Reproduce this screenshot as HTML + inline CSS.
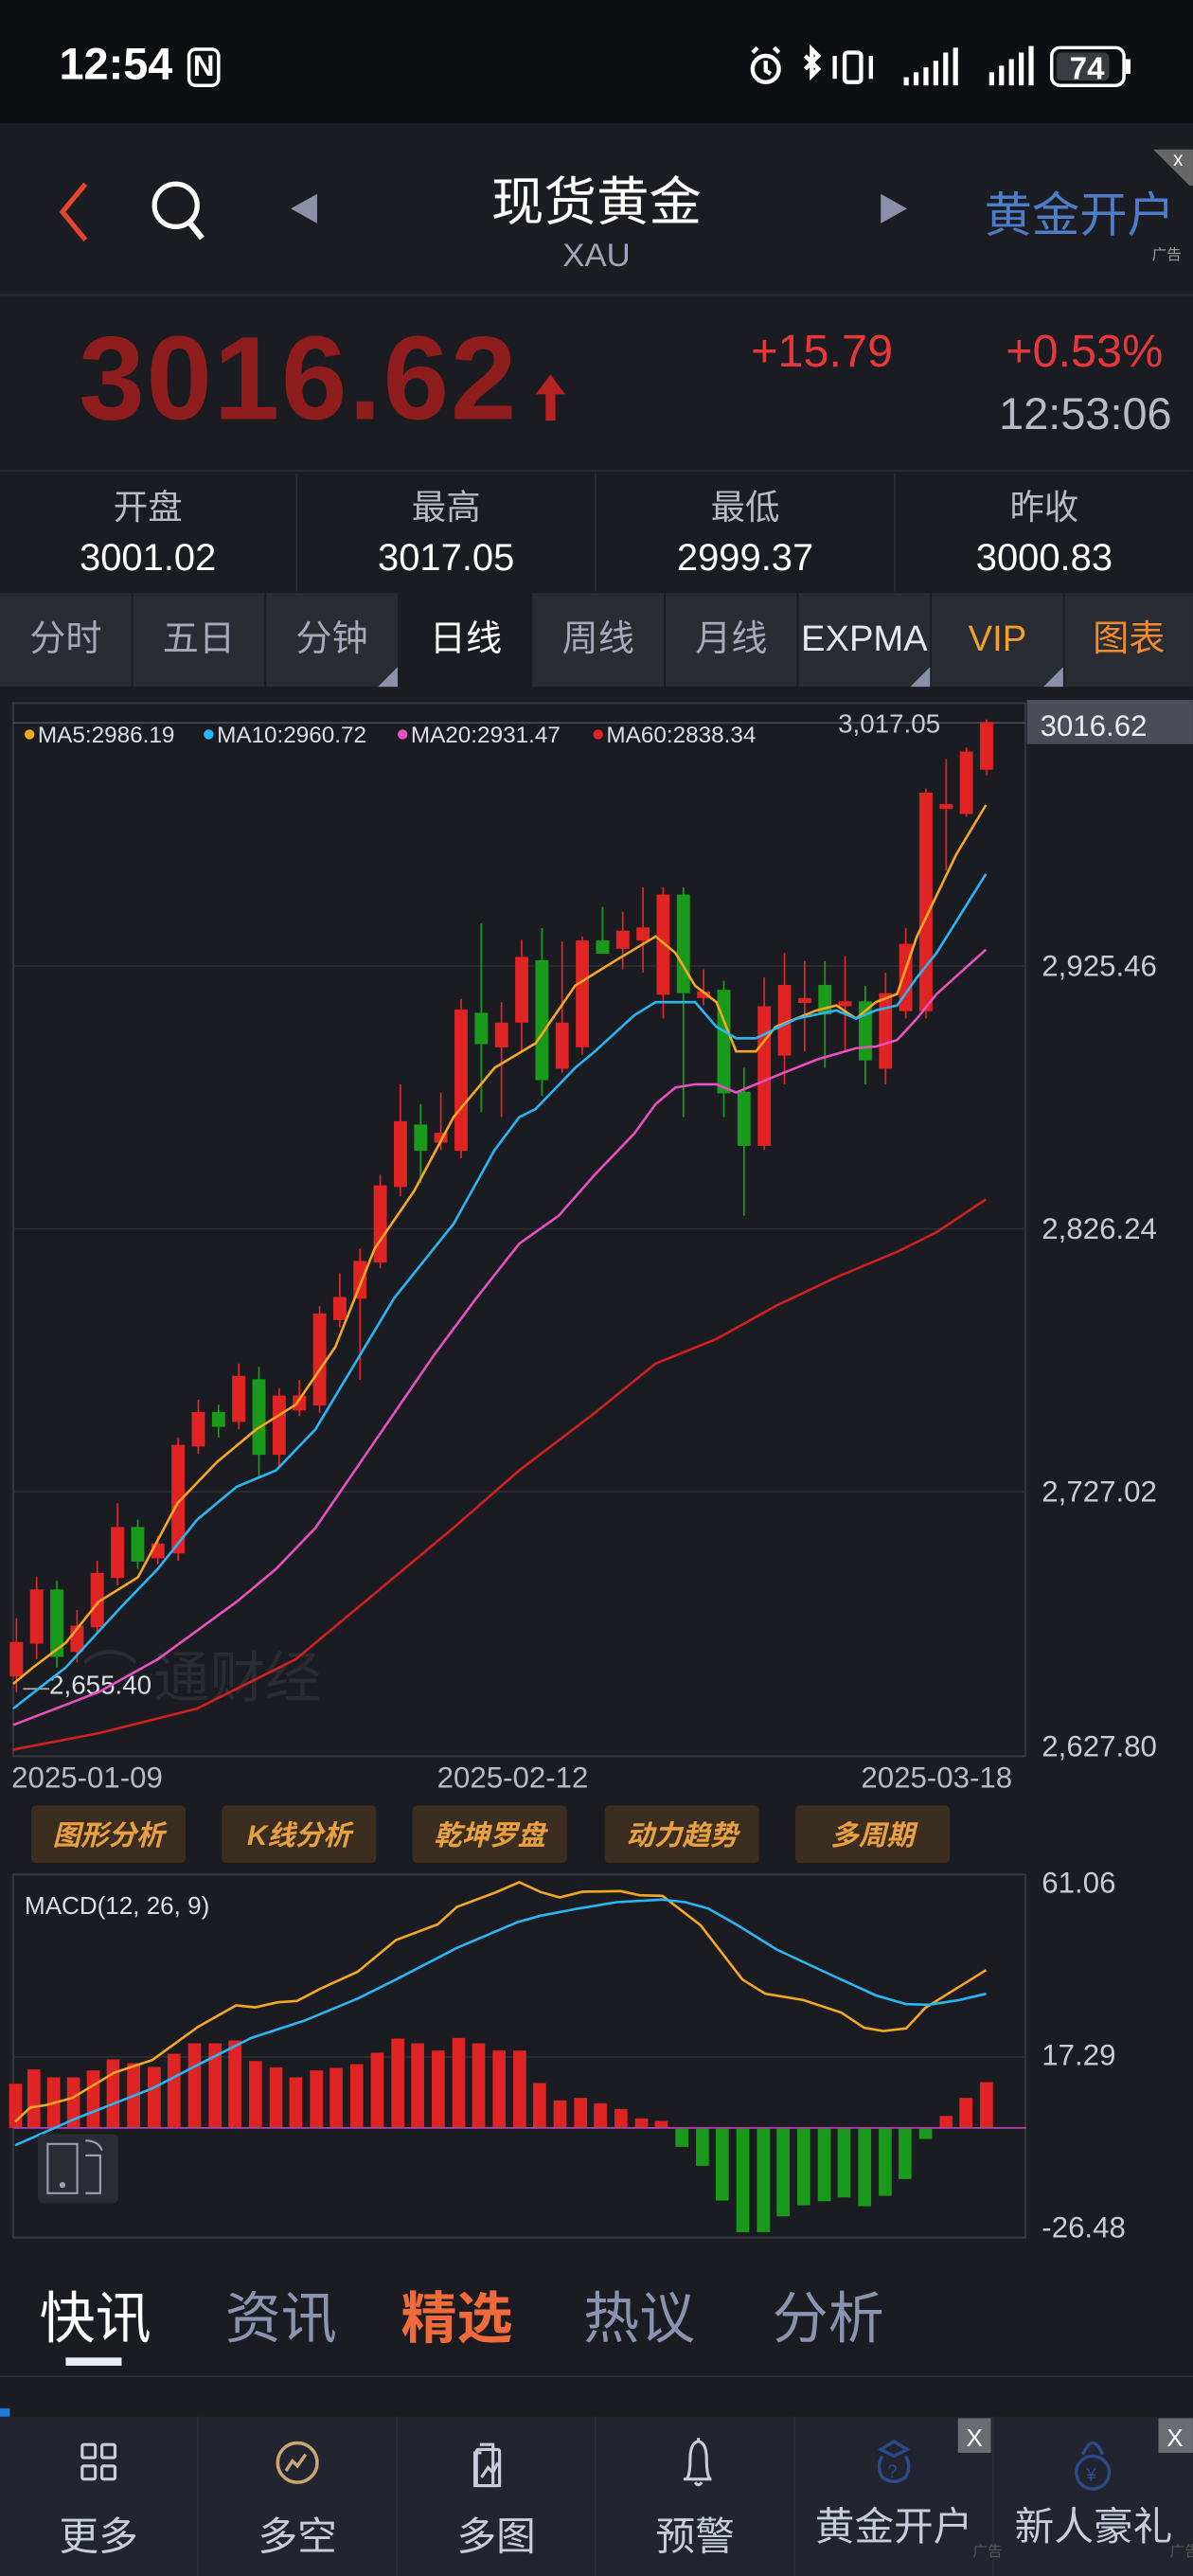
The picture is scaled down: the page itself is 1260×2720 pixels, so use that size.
<!DOCTYPE html>
<html><head><meta charset="utf-8">
<style>
*{margin:0;padding:0;box-sizing:border-box}
html,body{width:1260px;height:2720px;background:#1b1c21;overflow:hidden}
#w{width:726px;height:1568px;transform:scale(1.7355,1.7347);transform-origin:0 0;position:relative;font-family:"Liberation Sans","Noto Sans CJK SC",sans-serif;color:#fff;background:#1b1c21}
.a{position:absolute;white-space:nowrap}
</style></head><body><div id="w">
<!-- status -->
<div class="a" style="left:0;top:0;width:726px;height:75px;background:#0e0f12"></div>
<div class="a" style="left:36px;top:24px;font-size:27px;font-weight:bold">12:54</div>
<div class="a" style="left:114px;top:29px;width:20px;height:24px;border:2.5px solid #fff;border-radius:5px;font-size:18px;font-weight:bold;line-height:19px;text-align:center">N</div>
<svg class="a" style="left:450px;top:26px" width="240" height="30" viewBox="0 0 240 30">
<g fill="none" stroke="#fff" stroke-width="2.5"><circle cx="16" cy="16" r="8"/><path d="M16 11v6l3 2M8 6l3-3M24 6l-3-3"/>
<path d="M40 8l8 8-4 4V4l4 4-8 8"/><rect x="64" y="6" width="10" height="18" rx="2"/><path d="M58 8v14M80 8v14"/></g>
<g fill="#fff"><rect x="100" y="21" width="3" height="5"/><rect x="106" y="18" width="3" height="8"/><rect x="112" y="15" width="3" height="11"/><rect x="118" y="11" width="3" height="15"/><rect x="124" y="6" width="3" height="20"/><rect x="130" y="3" width="3" height="23"/>
<rect x="152" y="18" width="3" height="8"/><rect x="158" y="14" width="3" height="12"/><rect x="164" y="10" width="3" height="16"/><rect x="170" y="6" width="3" height="20"/><rect x="176" y="2" width="3" height="24"/></g>
<rect x="190" y="3" width="44" height="23" rx="5" fill="none" stroke="#fff" stroke-width="2"/><rect x="193" y="6" width="32" height="17" rx="3" fill="#3a3b40"/><rect x="235" y="10" width="3" height="9" fill="#fff"/>
<text x="201" y="22" font-size="19" font-weight="bold" fill="#fff" font-family="Liberation Sans">74</text></svg>
<!-- header -->
<div class="a" style="left:0;top:75px;width:726px;height:105px;background:#1c1d22;border-bottom:1px solid #2c2d33"></div>
<svg class="a" style="left:30px;top:108px" width="100" height="40"><path d="M22 4L8 21l14 17" fill="none" stroke="#e8452e" stroke-width="3"/><circle cx="77" cy="17" r="13" fill="none" stroke="#fff" stroke-width="3"/><path d="M85 27l8 10" stroke="#fff" stroke-width="3.5"/></svg>
<div class="a" style="left:177px;top:118px;width:0;height:0;border-top:9px solid transparent;border-bottom:9px solid transparent;border-right:16px solid #8a90a8"></div>
<div class="a" style="left:536px;top:118px;width:0;height:0;border-top:9px solid transparent;border-bottom:9px solid transparent;border-left:16px solid #8a90a8"></div>
<div class="a" style="left:263px;top:98px;width:200px;text-align:center;font-size:32px">现货黄金</div>
<div class="a" style="left:263px;top:145px;width:200px;text-align:center;font-size:20px;color:#a0a4b8">XAU</div>
<div class="a" style="left:599px;top:108px;font-size:29px;color:#4d7cc8">黄金开户</div>
<div class="a" style="left:701px;top:148px;font-size:9px;color:#999">广告</div>
<div class="a" style="left:700px;top:91px;width:26px;height:22px;background:linear-gradient(225deg,#666 50%,transparent 50%)"></div>
<div class="a" style="left:714px;top:90px;font-size:12px;color:#fff">x</div>
<!-- price -->
<div class="a" style="left:48px;top:190px;font-size:72px;font-weight:bold;color:#8f1d1d;letter-spacing:1px">3016.62</div>
<svg class="a" style="left:324px;top:226px" width="22" height="32"><path d="M11 2L2 14h6v16h6V14h6z" fill="#b92222"/></svg>
<div class="a" style="left:457px;top:198px;font-size:28px;color:#e8373a">+15.79</div>
<div class="a" style="left:612px;top:198px;font-size:28px;color:#e8373a">+0.53%</div>
<div class="a" style="left:608px;top:237px;font-size:27px;color:#b8bac4">12:53:06</div>
<!-- stats -->
<div class="a" style="left:0;top:286px;width:726px;height:1px;background:#2c2d33"></div>
<div class="a" style="left:180px;top:288px;width:1px;height:72px;background:#2c2d33"></div>
<div class="a" style="left:362px;top:288px;width:1px;height:72px;background:#2c2d33"></div>
<div class="a" style="left:544px;top:288px;width:1px;height:72px;background:#2c2d33"></div>
<div class="a" style="left:0;top:293px;width:180px;text-align:center;font-size:21px;color:#b8bac4">开盘</div>
<div class="a" style="left:181px;top:293px;width:181px;text-align:center;font-size:21px;color:#b8bac4">最高</div>
<div class="a" style="left:363px;top:293px;width:181px;text-align:center;font-size:21px;color:#b8bac4">最低</div>
<div class="a" style="left:545px;top:293px;width:181px;text-align:center;font-size:21px;color:#b8bac4">昨收</div>
<div class="a" style="left:0;top:326px;width:180px;text-align:center;font-size:23px">3001.02</div>
<div class="a" style="left:181px;top:326px;width:181px;text-align:center;font-size:23px">3017.05</div>
<div class="a" style="left:363px;top:326px;width:181px;text-align:center;font-size:23px">2999.37</div>
<div class="a" style="left:545px;top:326px;width:181px;text-align:center;font-size:23px">3000.83</div>
<!-- tabs -->
<div class="a" style="left:0;top:361px;width:726px;height:57px;background:#2a2c33;display:flex;font-size:22px;color:#a6aab8">
<div style="width:81px;text-align:center;line-height:55px;border-right:1px solid #1b1c21">分时</div>
<div style="width:81px;text-align:center;line-height:55px;border-right:1px solid #1b1c21">五日</div>
<div style="width:81px;text-align:center;line-height:55px;border-right:1px solid #1b1c21;position:relative">分钟<i style="position:absolute;right:0;bottom:0;border-left:12px solid transparent;border-bottom:12px solid #8a90a8"></i></div>
<div style="width:81px;text-align:center;line-height:55px;background:#1b1c21;color:#fff">日线</div>
<div style="width:81px;text-align:center;line-height:55px;border-right:1px solid #1b1c21">周线</div>
<div style="width:81px;text-align:center;line-height:55px;border-right:1px solid #1b1c21">月线</div>
<div style="width:81px;text-align:center;line-height:55px;border-right:1px solid #1b1c21;color:#e6e8f0;position:relative">EXPMA<i style="position:absolute;right:0;bottom:0;border-left:12px solid transparent;border-bottom:12px solid #8a90a8"></i></div>
<div style="width:81px;text-align:center;line-height:55px;border-right:1px solid #1b1c21;color:#f0a030;position:relative">VIP<i style="position:absolute;right:0;bottom:0;border-left:12px solid transparent;border-bottom:12px solid #8a90a8"></i></div>
<div style="width:78px;text-align:center;line-height:55px;color:#f08a30">图表</div>
</div>
<!-- main chart -->
<svg class="a" style="left:0;top:418px" width="726" height="960" viewBox="0 418 726 960" font-family="Liberation Sans">
<rect x="8" y="428" width="616" height="641" fill="none" stroke="#34363d" stroke-width="1.2"/>
<g stroke="#2c2e34" stroke-width="1"><line x1="8" y1="440" x2="624" y2="440" stroke="#4a4c54"/><line x1="8" y1="588" x2="624" y2="588"/><line x1="8" y1="748" x2="624" y2="748"/><line x1="8" y1="908" x2="624" y2="908"/></g>
<rect x="625" y="426" width="101" height="27" fill="#4a4d58"/>
<text x="633" y="448" font-size="18" fill="#e8eaf2">3016.62</text>
<g font-size="18" fill="#c8cad4"><text x="634" y="594">2,925.46</text><text x="634" y="754">2,826.24</text><text x="634" y="914">2,727.02</text><text x="634" y="1069">2,627.80</text></g>
<text x="510" y="446" font-size="16" fill="#c8cad4">3,017.05</text>
<g font-size="14" fill="#dcdee6"><circle cx="18" cy="447" r="3" fill="#f5a623"/><text x="23" y="452">MA5:2986.19</text><circle cx="127" cy="447" r="3" fill="#29b6f6"/><text x="132" y="452">MA10:2960.72</text><circle cx="245" cy="447" r="3" fill="#e84fc0"/><text x="250" y="452">MA20:2931.47</text><circle cx="364" cy="447" r="3" fill="#e02424"/><text x="369" y="452">MA60:2838.34</text></g>
<text x="50" y="1033" font-size="34" fill="#2a2c32">⌒  通财经</text>
<text x="30" y="1031" font-size="16" fill="#dcdee6">2,655.40</text>
<line x1="14" y1="1028" x2="30" y2="1028" stroke="#aaa"/>
<g id="cd">
<g stroke="#e02424" fill="#e02424">
<line x1="10" y1="985" x2="10" y2="1030"/><rect x="6.5" y="1000" width="7" height="20"/>
<line x1="22.3" y1="960" x2="22.3" y2="1010"/><rect x="18.8" y="968" width="7" height="32"/>
<line x1="46.9" y1="980" x2="46.9" y2="1012"/><rect x="43.4" y="990" width="7" height="15"/>
<line x1="59.2" y1="950" x2="59.2" y2="995"/><rect x="55.7" y="958" width="7" height="32"/>
<line x1="71.5" y1="915" x2="71.5" y2="965"/><rect x="68" y="930" width="7" height="30"/>
<line x1="96.1" y1="935" x2="96.1" y2="952"/><rect x="92.6" y="940" width="7" height="8"/>
<line x1="108.4" y1="875" x2="108.4" y2="950"/><rect x="104.9" y="880" width="7" height="65"/>
<line x1="120.7" y1="852" x2="120.7" y2="885"/><rect x="117.2" y="860" width="7" height="20"/>
<line x1="145.3" y1="830" x2="145.3" y2="870"/><rect x="141.8" y="838" width="7" height="27"/>
<line x1="169.9" y1="845" x2="169.9" y2="893"/><rect x="166.4" y="850" width="7" height="35"/>
<line x1="182.2" y1="840" x2="182.2" y2="862"/><rect x="178.7" y="850" width="7" height="8"/>
<line x1="194.5" y1="795" x2="194.5" y2="860"/><rect x="191" y="800" width="7" height="55"/>
<line x1="206.8" y1="775" x2="206.8" y2="808"/><rect x="203.3" y="790" width="7" height="13"/>
<line x1="219.1" y1="760" x2="219.1" y2="840"/><rect x="215.6" y="768" width="7" height="22"/>
<line x1="231.4" y1="715" x2="231.4" y2="772"/><rect x="227.9" y="722" width="7" height="46"/>
<line x1="243.7" y1="660" x2="243.7" y2="728"/><rect x="240.2" y="683" width="7" height="39"/>
<line x1="268.3" y1="665" x2="268.3" y2="700"/><rect x="264.8" y="690" width="7" height="5"/>
<line x1="280.6" y1="608" x2="280.6" y2="705"/><rect x="277.1" y="615" width="7" height="85"/>
<line x1="305.2" y1="610" x2="305.2" y2="680"/><rect x="301.7" y="623" width="7" height="14"/>
<line x1="317.5" y1="572" x2="317.5" y2="640"/><rect x="314" y="583" width="7" height="39"/>
<line x1="342.1" y1="573" x2="342.1" y2="653"/><rect x="338.6" y="623" width="7" height="27"/>
<line x1="354.4" y1="570" x2="354.4" y2="642"/><rect x="350.9" y="573" width="7" height="64"/>
<line x1="379" y1="555" x2="379" y2="590"/><rect x="375.5" y="567" width="7" height="10"/>
<line x1="391.3" y1="540" x2="391.3" y2="592"/><rect x="387.8" y="565" width="7" height="7"/>
<line x1="403.6" y1="540" x2="403.6" y2="620"/><rect x="400.1" y="545" width="7" height="60"/>
<line x1="428.2" y1="590" x2="428.2" y2="612"/><rect x="424.7" y="604" width="7" height="3"/>
<line x1="465.1" y1="595" x2="465.1" y2="700"/><rect x="461.6" y="613" width="7" height="84"/>
<line x1="477.4" y1="580" x2="477.4" y2="660"/><rect x="473.9" y="600" width="7" height="42"/>
<line x1="489.7" y1="585" x2="489.7" y2="640"/><rect x="486.2" y="608" width="7" height="2"/>
<line x1="514.3" y1="582" x2="514.3" y2="640"/><rect x="510.8" y="610" width="7" height="2"/>
<line x1="538.9" y1="592" x2="538.9" y2="660"/><rect x="535.4" y="605" width="7" height="45"/>
<line x1="551.2" y1="565" x2="551.2" y2="620"/><rect x="547.7" y="575" width="7" height="40"/>
<line x1="563.5" y1="480" x2="563.5" y2="620"/><rect x="560" y="483" width="7" height="132"/>
<line x1="575.8" y1="462" x2="575.8" y2="530"/><rect x="572.3" y="490" width="7" height="2"/>
<line x1="588.1" y1="455" x2="588.1" y2="497"/><rect x="584.6" y="458" width="7" height="37"/>
<line x1="600.4" y1="438" x2="600.4" y2="472"/><rect x="596.9" y="440" width="7" height="28"/>
</g>
<g stroke="#1a9a1a" fill="#1a9a1a">
<line x1="34.6" y1="962" x2="34.6" y2="1015"/><rect x="31.1" y="968" width="7" height="40"/>
<line x1="83.8" y1="925" x2="83.8" y2="955"/><rect x="80.3" y="930" width="7" height="20"/>
<line x1="133" y1="855" x2="133" y2="875"/><rect x="129.5" y="860" width="7" height="8"/>
<line x1="157.6" y1="832" x2="157.6" y2="900"/><rect x="154.1" y="840" width="7" height="45"/>
<line x1="256" y1="672" x2="256" y2="720"/><rect x="252.5" y="685" width="7" height="15"/>
<line x1="292.9" y1="562" x2="292.9" y2="677"/><rect x="289.4" y="617" width="7" height="18"/>
<line x1="329.8" y1="565" x2="329.8" y2="667"/><rect x="326.3" y="585" width="7" height="72"/>
<line x1="366.7" y1="552" x2="366.7" y2="580"/><rect x="363.2" y="573" width="7" height="7"/>
<line x1="415.9" y1="540" x2="415.9" y2="680"/><rect x="412.4" y="545" width="7" height="59"/>
<line x1="440.5" y1="597" x2="440.5" y2="680"/><rect x="437" y="603" width="7" height="62"/>
<line x1="452.8" y1="650" x2="452.8" y2="740"/><rect x="449.3" y="665" width="7" height="32"/>
<line x1="502" y1="585" x2="502" y2="650"/><rect x="498.5" y="600" width="7" height="17"/>
<line x1="526.6" y1="600" x2="526.6" y2="660"/><rect x="523.1" y="610" width="7" height="35"/>
</g></g>
<g fill="none" stroke-width="1.5">
<polyline stroke="#f5a623" points="8,1025 20,1015 40,1000 60,975 84,960 108,915 132,890 156,870 180,855 204,820 228,760 252,725 276,680 301,650 326,635 350,600 374,585 399,570 411,580 423,600 436,610 448,640 460,640 472,625 497,615 509,612 521,620 533,610 546,605 558,570 570,545 582,520 600,490"/>
<polyline stroke="#29b6f6" points="8,1040 40,1015 72,980 96,955 120,925 144,905 168,895 192,870 216,830 240,790 264,760 276,745 301,700 316,680 326,675 350,650 362,640 386,618 399,610 423,610 436,625 448,632 460,632 485,620 509,615 521,620 533,615 546,612 558,595 570,580 600,532"/>
<polyline stroke="#e84fc0" points="8,1050 60,1030 96,1010 144,975 168,955 192,930 216,895 240,860 264,825 290,790 316,757 340,740 362,715 386,690 399,672 411,662 423,660 436,660 448,665 472,655 497,645 521,638 533,637 546,633 558,620 570,605 600,578"/>
<polyline stroke="#d02020" points="8,1065 60,1055 120,1040 180,1010 240,960 276,930 316,895 362,860 399,830 436,815 472,795 510,777 546,762 570,750 600,730"/>
</g>
<g font-size="18" fill="#b8bac4"><text x="7" y="1088">2025-01-09</text><text x="266" y="1088">2025-02-12</text><text x="524" y="1088">2025-03-18</text></g>
<!-- buttons -->
<g fill="#3b2e20"><rect x="19" y="1099" width="94" height="35" rx="3"/><rect x="135" y="1099" width="94" height="35" rx="3"/><rect x="251" y="1099" width="94" height="35" rx="3"/><rect x="368" y="1099" width="94" height="35" rx="3"/><rect x="484" y="1099" width="94" height="35" rx="3"/></g>
<g font-size="17" font-weight="bold" font-style="italic" fill="#e8a040" text-anchor="middle" font-family="Liberation Sans,Noto Sans CJK SC,sans-serif"><text x="66" y="1123">图形分析</text><text x="182" y="1123">K线分析</text><text x="298" y="1123">乾坤罗盘</text><text x="415" y="1123">动力趋势</text><text x="531" y="1123">多周期</text></g>
<!-- MACD -->
<rect x="8" y="1141" width="616" height="221" fill="none" stroke="#34363d" stroke-width="1.2"/>
<line x1="8" y1="1252" x2="624" y2="1252" stroke="#2c2e34"/>
<g font-size="18" fill="#c8cad4"><text x="634" y="1152">61.06</text><text x="634" y="1257">17.29</text><text x="634" y="1362">-26.48</text></g>
<text x="15" y="1165" font-size="15" fill="#dcdee6">MACD(12, 26, 9)</text>
<g transform="translate(0,1072.3) scale(0.4634,0.1922)">
<g fill="#e02424">
<rect x="12" y="1020" width="17" height="140"/><rect x="36" y="975" width="17" height="185"/><rect x="62" y="1000" width="17" height="160"/><rect x="88" y="1000" width="17" height="160"/><rect x="114" y="978" width="17" height="182"/><rect x="140" y="943" width="17" height="217"/><rect x="167" y="955" width="17" height="205"/><rect x="194" y="967" width="17" height="193"/><rect x="220" y="925" width="17" height="235"/><rect x="247" y="892" width="17" height="268"/><rect x="274" y="892" width="17" height="268"/><rect x="300" y="883" width="17" height="277"/><rect x="327" y="948" width="17" height="212"/><rect x="354" y="968" width="17" height="192"/><rect x="380" y="1000" width="17" height="160"/><rect x="407" y="978" width="17" height="182"/><rect x="433" y="970" width="17" height="190"/><rect x="460" y="958" width="17" height="202"/><rect x="487" y="922" width="17" height="238"/><rect x="514" y="877" width="17" height="283"/><rect x="540" y="892" width="17" height="268"/><rect x="567" y="915" width="17" height="245"/><rect x="594" y="875" width="17" height="285"/><rect x="620" y="892" width="17" height="268"/><rect x="647" y="915" width="17" height="245"/><rect x="674" y="915" width="17" height="245"/><rect x="700" y="1018" width="17" height="142"/><rect x="727" y="1073" width="17" height="87"/><rect x="754" y="1065" width="17" height="95"/><rect x="780" y="1082" width="17" height="78"/><rect x="807" y="1100" width="17" height="60"/><rect x="834" y="1130" width="17" height="30"/><rect x="860" y="1138" width="17" height="22"/>
<rect x="1234" y="1122" width="17" height="38"/><rect x="1260" y="1065" width="17" height="95"/><rect x="1287" y="1015" width="17" height="145"/></g>
<g fill="#1a9a1a">
<rect x="887" y="1160" width="17" height="60"/><rect x="914" y="1160" width="17" height="120"/><rect x="940" y="1160" width="17" height="230"/><rect x="967" y="1160" width="17" height="330"/><rect x="994" y="1160" width="17" height="330"/><rect x="1020" y="1160" width="17" height="280"/><rect x="1047" y="1160" width="17" height="245"/><rect x="1074" y="1160" width="17" height="232"/><rect x="1100" y="1160" width="17" height="220"/><rect x="1127" y="1160" width="17" height="248"/><rect x="1154" y="1160" width="17" height="215"/><rect x="1180" y="1160" width="17" height="162"/><rect x="1207" y="1160" width="17" height="35"/></g>
<line x1="18" y1="1160" x2="1348" y2="1160" stroke="#a040a0" stroke-width="1.2" vector-effect="non-scaling-stroke"/>
<polyline fill="none" stroke="#f5a623" stroke-width="1.5" vector-effect="non-scaling-stroke" points="20,1140 40,1095 60,1088 95,1065 150,985 200,945 260,840 310,772 335,778 365,762 390,758 420,720 470,665 520,565 575,515 600,460 650,415 682,382 710,413 735,430 765,412 815,410 840,423 870,425 920,518 975,690 1005,735 1055,755 1105,795 1135,843 1160,853 1190,845 1215,780 1295,660"/>
<polyline fill="none" stroke="#29b6f6" stroke-width="1.5" vector-effect="non-scaling-stroke" points="20,1215 100,1130 200,1035 260,960 330,875 400,820 470,750 520,690 600,590 680,508 710,488 760,465 810,445 870,437 900,445 930,465 970,520 1020,595 1100,685 1150,740 1190,768 1220,770 1260,755 1295,735"/>
</g>
<rect x="23" y="1299" width="49" height="42" rx="3" fill="#2a2c33"/>
<g fill="none" stroke="#9aa0b0" stroke-width="1.2"><rect x="29" y="1305" width="18" height="30"/><path d="M52 1312h9v23h-9M52 1303q8 0 10 6"/></g><circle cx="38" cy="1330" r="1.8" fill="#9aa0b0"/>
</svg>
<!-- news tabs -->
<div class="a" style="left:24px;top:1384px;font-size:34px;color:#fff">快讯</div>
<div class="a" style="left:40px;top:1435px;width:34px;height:5px;background:#e6ecf8"></div>
<div class="a" style="left:137px;top:1384px;font-size:34px;color:#8a93b0">资讯</div>
<div class="a" style="left:244px;top:1384px;font-size:34px;color:#f06a3c;font-weight:bold">精选</div>
<div class="a" style="left:355px;top:1384px;font-size:34px;color:#8a93b0">热议</div>
<div class="a" style="left:470px;top:1384px;font-size:34px;color:#8a93b0">分析</div>
<div class="a" style="left:0;top:1446px;width:726px;height:1px;background:#2e3036"></div>
<div class="a" style="left:0;top:1466px;width:6px;height:6px;background:#1e7ad8"></div>
<!-- bottom nav -->
<div class="a" style="left:0;top:1471px;width:726px;height:97px;background:#22242f;display:flex;font-size:24px;color:#c8ccdc">
<div style="width:121px;border-right:1px solid #2c2e3a;text-align:center;padding-top:53px">更多</div>
<div style="width:121px;border-right:1px solid #2c2e3a;text-align:center;padding-top:53px">多空</div>
<div style="width:121px;border-right:1px solid #2c2e3a;text-align:center;padding-top:53px">多图</div>
<div style="width:121px;border-right:1px solid #2c2e3a;text-align:center;padding-top:53px">预警</div>
<div style="width:121px;border-right:1px solid #2c2e3a;text-align:center;padding-top:47px">黄金开户</div>
<div style="width:121px;text-align:center;padding-top:47px">新人豪礼</div>
</div>
<svg class="a" style="left:0;top:1471px" width="726" height="97">
<g fill="none" stroke="#c8ccdc" stroke-width="1.8"><rect x="50" y="17" width="8" height="8" rx="1"/><rect x="62" y="17" width="8" height="8" rx="1"/><rect x="50" y="30" width="8" height="8" rx="1"/><rect x="62" y="30" width="8" height="8" rx="1"/>
<path d="M292 17h8v25M293 22h-4v20h15v-4"/><rect x="290" y="20" width="14" height="22" rx="1"/><path d="M293 37l4-6 3 3 3-6"/>
<path d="M416 38h17M418 38q2-3 2-12q0-10 5-11q5 1 5 11q0 9 2 12M425 13v2M423 40q2 3 4 0"/></g>
<circle cx="181" cy="28" r="12" fill="none" stroke="#c9a672" stroke-width="2"/><path d="M174 33l4-6 3 3 5-7" fill="none" stroke="#c9a672" stroke-width="2"/>
<g fill="none" stroke="#2a4a8a" stroke-width="2"><path d="M536 20l8-5 8 5-8 4z"/><path d="M537 24q-4 6 0 13q7 5 14 0q4-7 0-13"/><circle cx="665" cy="34" r="10"/><path d="M659 23q6-14 12 0"/></g>
<text x="540" y="37" font-size="11" fill="#2a4a8a" font-family="Liberation Sans">?</text><text x="661" y="39" font-size="11" fill="#2a4a8a" font-family="Liberation Sans">¥</text>
<rect x="583" y="1" width="20" height="21" fill="#6a6c74"/><rect x="705" y="1" width="21" height="21" fill="#6a6c74"/>
<g font-size="15" fill="#fff" font-family="Liberation Sans"><text x="588" y="18">X</text><text x="710" y="18">X</text></g>
<g font-size="9" fill="#555"><text x="592" y="85">广告</text><text x="712" y="85">广告</text></g>
</svg>
</div></body></html>
